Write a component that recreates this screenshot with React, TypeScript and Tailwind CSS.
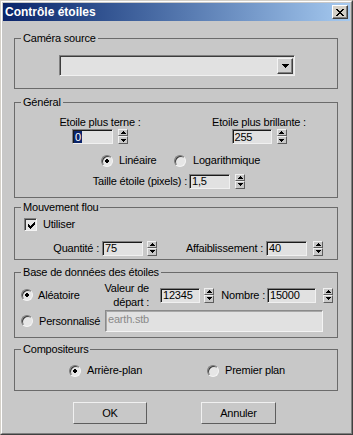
import React from 'react';

// tiny pixel glyphs (arrows, check, close cross)
function Pixels({ rows, color = '#000' }: { rows: string[]; color?: string }) {
  const w = rows[0].length;
  const h = rows.length;
  return (
    <svg width={w} height={h} viewBox={`0 0 ${w} ${h}`} shapeRendering="crispEdges" className="block">
      {rows.flatMap((r, y) =>
        r.split('').map((c, x) =>
          c === '#' ? <rect key={`${x}-${y}`} x={x} y={y} width={1} height={1} fill={color} /> : null
        )
      )}
    </svg>
  );
}

const UP = ['..#..', '.###.', '#####'];
const DOWN = ['#####', '.###.', '..#..'];
const DROP = ['#######', '.#####.', '..###..', '...#...'];
const CHECK = ['......#', '.....##', '#...###', '##.###.', '#####..', '.###...', '..#....'];
const CROSS = ['##....##', '.##..##.', '..####..', '...##...', '..####..', '.##..##.', '##....##'];
const DOT = ['.##.', '####', '####', '.##.'];

const raised =
  'bg-[#c8c8c8] border border-t-[#f0f0f0] border-l-[#f0f0f0] border-b-[#5e5e5e] border-r-[#5e5e5e]';

function Spinner({ className = '' }: { className?: string }) {
  return (
    <div className={`flex flex-col w-[10px] h-[15px] shrink-0 ${className}`}>
      <div className={`h-[7px] flex items-center justify-center ${raised}`}>
        <Pixels rows={UP} />
      </div>
      <div className={`h-[8px] flex items-center justify-center ${raised}`}>
        <Pixels rows={DOWN} />
      </div>
    </div>
  );
}

function Field({
  value,
  className = '',
  selected = false,
}: {
  value: string;
  className?: string;
  selected?: boolean;
}) {
  return (
    <div
      className={`h-[15px] shrink-0 flex items-center bg-[#e1e1e1] border border-t-[#808080] border-l-[#808080] border-b-[#f0f0f0] border-r-[#f0f0f0] shadow-[inset_1px_1px_0_#1a1a1a] pl-[1px] ${className}`}
    >
      {selected ? (
        <span className="bg-[#0a246a] text-white px-[1px] leading-[12px] mt-[1px]">{value}</span>
      ) : (
        <span className="pl-[1px] pt-[1px] leading-[13px]">{value}</span>
      )}
    </div>
  );
}

function Radio({ checked = false }: { checked?: boolean }) {
  return (
    <div className="w-[12px] h-[12px] shrink-0 rounded-full flex items-center justify-center bg-[#e6e6e6] border border-t-[#7a7a7a] border-l-[#7a7a7a] border-b-[#f4f4f4] border-r-[#f4f4f4] shadow-[inset_1px_1px_0_#3c3c3c]">
      {checked && <Pixels rows={DOT} />}
    </div>
  );
}

function Checkbox() {
  return (
    <div className="w-[13px] h-[13px] shrink-0 flex items-center justify-center pl-[1px] pt-[1px] bg-[#e6e6e6] border border-t-[#808080] border-l-[#808080] border-b-[#f4f4f4] border-r-[#f4f4f4] shadow-[inset_1px_1px_0_#3c3c3c]">
      <Pixels rows={CHECK} />
    </div>
  );
}

function Group({
  title,
  className = '',
  children,
}: {
  title: string;
  className?: string;
  children?: React.ReactNode;
}) {
  return (
    <div className={`relative ml-[11px] w-[324px] shrink-0 border border-[#6b6b6b] ${className}`}>
      <span className="absolute left-[6px] top-[-7px] bg-[#c8c8c8] px-[2px] leading-[13px] whitespace-nowrap">
        {title}
      </span>
      {children}
    </div>
  );
}

export default function App() {
  return (
    <div className="w-[353px] h-[435px] bg-[#c8c8c8] border border-t-[#d4d0c8] border-l-[#d4d0c8] border-b-[#404040] border-r-[#404040] font-['Liberation_Sans',Arial,sans-serif] text-[11px] tracking-[-0.2px] text-black overflow-hidden">
      <div className="h-full flex flex-col p-[1px] border border-t-white border-l-white border-b-[#808080] border-r-[#808080]">
        {/* Title bar */}
        <div className="h-[18px] shrink-0 flex items-center justify-between pl-[2px] pr-[2px] bg-linear-to-r from-[#0a246a] to-[#a6caf0]">
          <span className="text-white font-bold text-[12px] tracking-normal leading-none">Contrôle étoiles</span>
          <div className="w-[16px] h-[14px] flex items-center justify-center bg-[#d4d0c8] border border-t-white border-l-white border-b-[#404040] border-r-[#404040] shadow-[inset_-1px_-1px_0_#808080]">
            <Pixels rows={CROSS} />
          </div>
        </div>

        {/* Caméra source */}
        <Group title="Caméra source" className="mt-[17px] h-[51px]">
          <div className="mt-[16px] ml-[44px] w-[236px] h-[21px] flex items-center justify-end pr-[1px] bg-[#e1e1e1] border border-t-[#808080] border-l-[#808080] border-b-[#f0f0f0] border-r-[#f0f0f0] shadow-[inset_1px_1px_0_#3c3c3c]">
            <div className="w-[16px] h-[16px] flex items-center justify-center bg-[#d0d0d0] border border-t-[#f4f4f4] border-l-[#f4f4f4] border-b-[#404040] border-r-[#404040] shadow-[inset_-1px_-1px_0_#808080]">
              <Pixels rows={DROP} />
            </div>
          </div>
        </Group>

        {/* Général */}
        <Group title="Général" className="mt-[13px] h-[96px]">
          <div className="flex mt-[13px]">
            <div className="w-[170px] flex flex-col items-center">
              <span className="leading-[13px]">Etoile plus terne :</span>
              <div className="flex">
                <Field value="0" selected className="w-[41px]" />
                <Spinner className="ml-[5px]" />
              </div>
            </div>
            <div className="w-[148px] flex flex-col items-center">
              <span className="leading-[13px]">Etoile plus brillante :</span>
              <div className="flex">
                <Field value="255" className="w-[40px]" />
                <Spinner className="ml-[5px]" />
              </div>
            </div>
          </div>
          <div className="flex items-center h-[13px] mt-[10px] ml-[86px]">
            <div className="w-[73px] flex items-center">
              <Radio checked />
              <span className="ml-[6px]">Linéaire</span>
            </div>
            <div className="flex items-center">
              <Radio />
              <span className="ml-[7px]">Logarithmique</span>
            </div>
          </div>
          <div className="flex items-center mt-[6px]">
            <span className="w-[172px] text-right">Taille étoile (pixels) :</span>
            <Field value="1,5" className="ml-[2px] w-[41px]" />
            <Spinner className="ml-[5px]" />
          </div>
        </Group>

        {/* Mouvement flou */}
        <Group title="Mouvement flou" className="mt-[9px] h-[53px]">
          <div className="flex items-center h-[13px] mt-[10px] ml-[9px]">
            <Checkbox />
            <span className="ml-[6px]">Utiliser</span>
          </div>
          <div className="flex items-center mt-[9px]">
            <span className="w-[84px] text-right">Quantité :</span>
            <Field value="75" className="ml-[3px] w-[41px]" />
            <Spinner className="ml-[4px]" />
            <span className="w-[106px] text-right">Affaiblissement :</span>
            <Field value="40" className="ml-[3px] w-[41px]" />
            <Spinner className="ml-[6px]" />
          </div>
        </Group>

        {/* Base de données des étoiles */}
        <Group title="Base de données des étoiles" className="mt-[12px] h-[66px]">
          <div className="flex items-center h-[28px] mt-[8px]">
            <div className="w-[79px] ml-[6px] flex items-center">
              <Radio checked />
              <span className="ml-[5px]">Aléatoire</span>
            </div>
            <div className="w-[49px] text-right leading-[14px] whitespace-nowrap">
              Valeur de
              <br />
              départ :
            </div>
            <Field value="12345" className="ml-[11px] w-[40px]" />
            <Spinner className="ml-[4px]" />
            <span className="w-[51px] text-right">Nombre :</span>
            <Field value="15000" className="ml-[2px] w-[49px]" />
            <Spinner className="ml-[7px]" />
          </div>
          <div className="flex items-center h-[22px] mt-[1px]">
            <div className="w-[84px] ml-[6px] flex items-center">
              <Radio />
              <span className="ml-[6px]">Personnalisé</span>
            </div>
            <div className="w-[218px] h-[22px] pl-[2px] pt-[2px] bg-[#e1e1e1] border border-t-[#8a8a8a] border-l-[#8a8a8a] border-b-[#f4f4f4] border-r-[#f4f4f4] shadow-[inset_1px_1px_0_#a8a8a8] text-[#8a8a8a] leading-[13px]">
              earth.stb
            </div>
          </div>
        </Group>

        {/* Compositeurs */}
        <Group title="Compositeurs" className="mt-[11px] h-[42px]">
          <div className="flex items-center h-[13px] mt-[14px] ml-[54px]">
            <div className="w-[138px] flex items-center">
              <Radio checked />
              <span className="ml-[6px]">Arrière-plan</span>
            </div>
            <div className="flex items-center">
              <Radio />
              <span className="ml-[6px]">Premier plan</span>
            </div>
          </div>
        </Group>

        {/* Buttons */}
        <div className="flex mt-[11px] ml-[70px]">
          <button className={`w-[74px] h-[22px] ${raised}`}>OK</button>
          <button className={`ml-[54px] w-[75px] h-[22px] ${raised}`}>Annuler</button>
        </div>
      </div>
    </div>
  );
}
